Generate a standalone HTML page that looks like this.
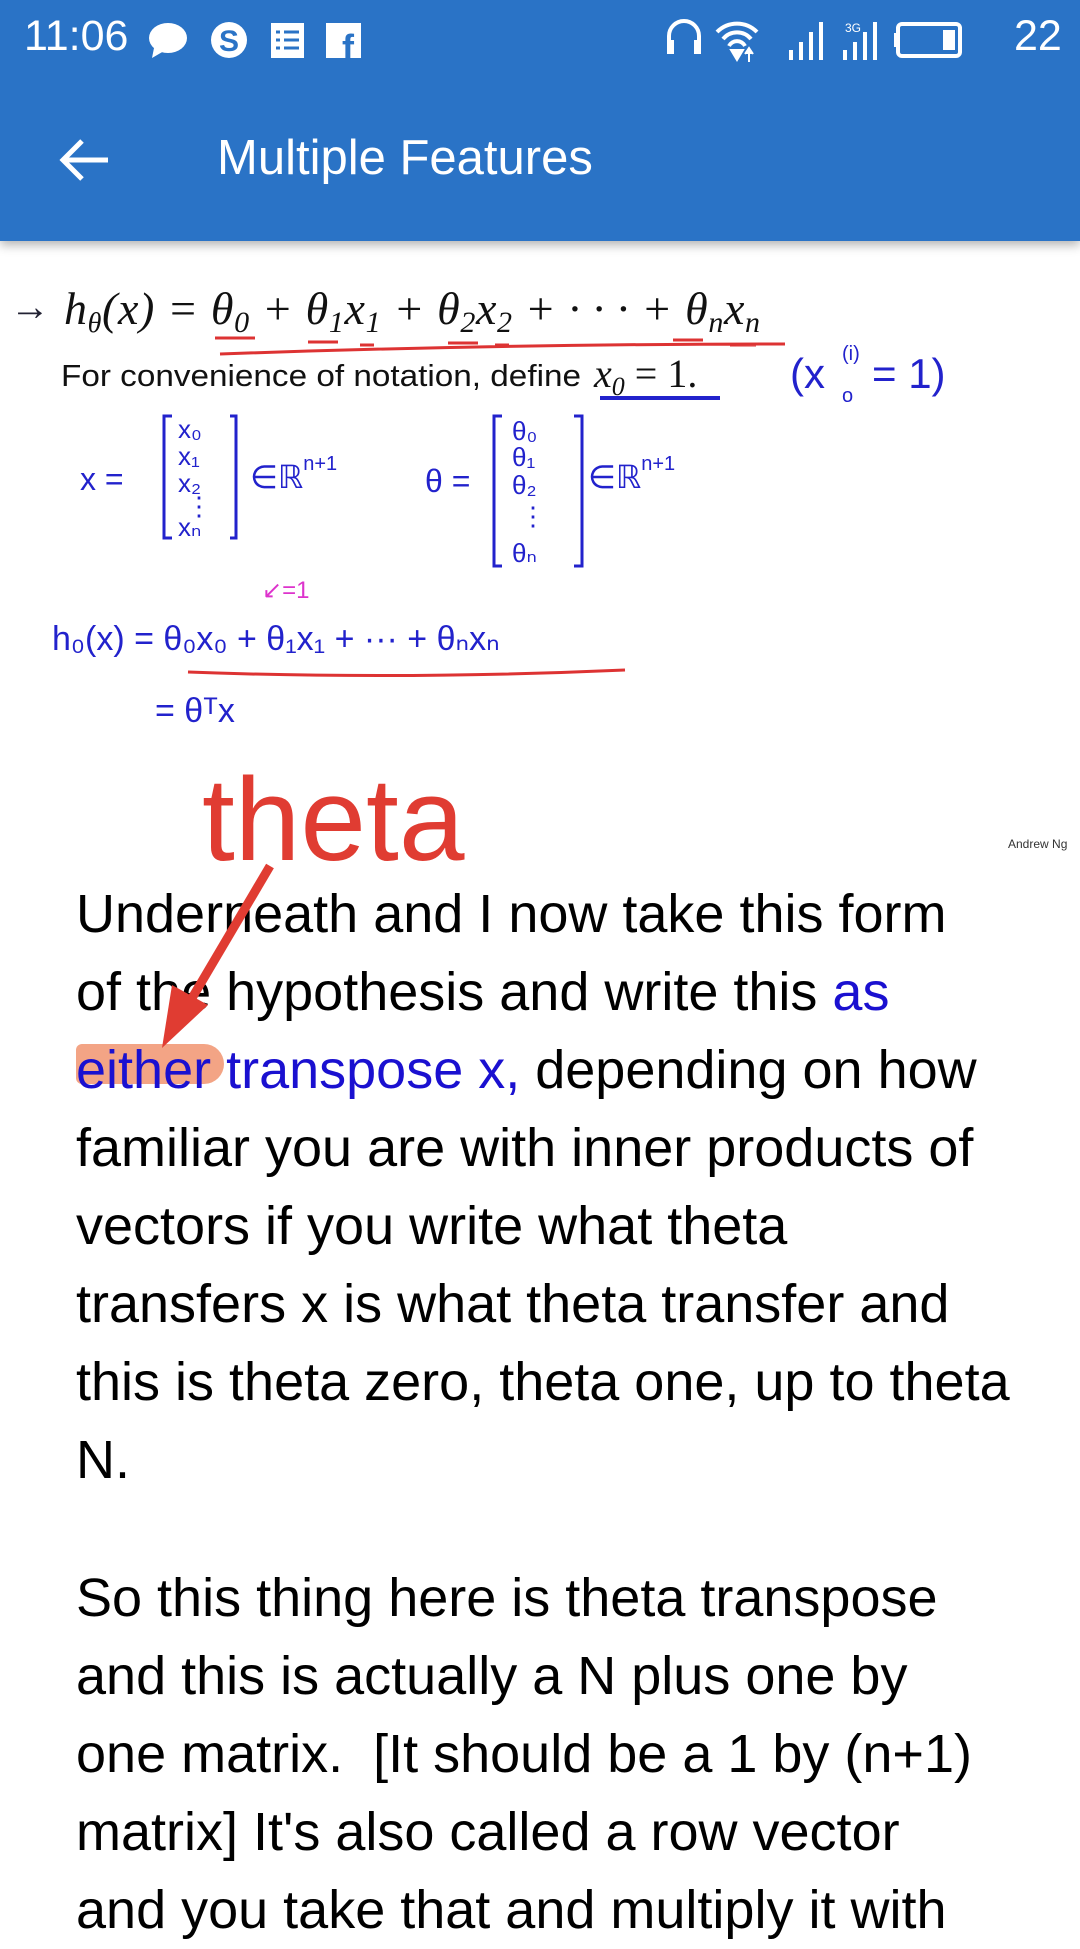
<!DOCTYPE html>
<html><head><meta charset="utf-8"><style>
body{margin:0;width:1080px;height:1920px;overflow:hidden;background:#fff;font-family:"Liberation Sans",sans-serif;position:relative}
.bar{position:absolute;left:0;top:0;width:1080px;height:241px;background:#2a73c6;box-shadow:0 4px 10px rgba(0,0,0,.3)}
.st{position:absolute;color:#fff;font-size:43px;top:12px}
.title{position:absolute;left:217px;top:130px;color:#fff;font-size:49px}
.txt{position:absolute;left:76px;font-size:54px;line-height:78px;color:#000;white-space:nowrap}
.b{color:#1a10d0}
</style></head><body>
<div class="bar">
<div class="st" style="left:24px">11:06</div>
<svg style="position:absolute;left:148px;top:20px" width="220" height="40" viewBox="0 0 220 40">
<ellipse cx="20" cy="18" rx="19" ry="15" fill="#fff"/><path d="M6 28 L4 38 L16 31Z" fill="#fff"/>
<circle cx="81" cy="20" r="18" fill="#fff"/><text x="81" y="31" font-size="30" font-weight="bold" text-anchor="middle" fill="#2a73c6" font-family="Liberation Sans">S</text>
<rect x="123" y="3" width="33" height="35" fill="#fff"/><path d="M128 12h4M136 12h15M128 20h4M136 20h15M128 28h4M136 28h15" stroke="#2a73c6" stroke-width="3"/>
<rect x="178" y="3" width="35" height="35" fill="#fff"/><text x="200" y="40" font-size="36" font-weight="bold" text-anchor="middle" fill="#2a73c6" font-family="Liberation Sans">f</text>
</svg>
<svg style="position:absolute;left:665px;top:18px" width="330" height="44" viewBox="0 0 330 44">
<path d="M4 30 V18 a15 15 0 0 1 30 0 V30" stroke="#fff" stroke-width="4" fill="none"/><rect x="2" y="22" width="7" height="14" fill="#fff"/><rect x="29" y="22" width="7" height="14" fill="#fff"/>
<path d="M52 14 a28 28 0 0 1 40 0 M58 21 a18 18 0 0 1 28 0 M64 28 a9 9 0 0 1 16 0" stroke="#fff" stroke-width="4" fill="none"/><path d="M66 32 L72 42 L78 32Z M84 44 V32 M80 36 L84 30 L88 36" fill="#fff" stroke="#fff" stroke-width="2"/>
<path d="M126 42V32 M136 42V24 M146 42V14 M156 42V4" stroke="#fff" stroke-width="4"/>
<text x="180" y="14" font-size="12" fill="#fff" font-family="Liberation Sans">3G</text>
<path d="M180 42V32 M190 42V24 M200 42V14 M210 42V4" stroke="#fff" stroke-width="4"/>
<rect x="233" y="6" width="62" height="32" rx="4" stroke="#fff" stroke-width="4" fill="none"/><rect x="278" y="12" width="12" height="20" fill="#fff"/><rect x="229" y="15" width="4" height="14" fill="#fff"/>
</svg>
<div class="st" style="left:1014px">22</div>
<svg style="position:absolute;left:58px;top:138px" width="52" height="44" viewBox="0 0 52 44"><path d="M50 22H6 M24 3 L5 22 L24 41" stroke="#fff" stroke-width="5" fill="none"/></svg>
<div class="title">Multiple Features</div>
</div>

<svg style="position:absolute;left:0;top:260px" width="1080" height="600" viewBox="0 0 1080 600" font-family="Liberation Serif">
<text x="10" y="60" font-size="40" fill="#223">→</text>
<text x="64" y="64" font-size="46" font-style="italic" fill="#111" textLength="696" lengthAdjust="spacing">h<tspan font-size="28" dy="8">θ</tspan><tspan dy="-8">(x) = θ</tspan><tspan font-size="30" dy="8">0</tspan><tspan dy="-8"> + θ</tspan><tspan font-size="30" dy="8">1</tspan><tspan dy="-8">x</tspan><tspan font-size="30" dy="8">1</tspan><tspan dy="-8"> + θ</tspan><tspan font-size="30" dy="8">2</tspan><tspan dy="-8">x</tspan><tspan font-size="30" dy="8">2</tspan><tspan dy="-8"> + · · · + θ</tspan><tspan font-size="30" dy="8">n</tspan><tspan dy="-8">x</tspan><tspan font-size="30" dy="8">n</tspan></text>
<path d="M215 78h40 M308 82h30 M360 85h14 M448 83h30 M495 85h14 M673 80h30 M730 85h26 M220 94 Q500 84 785 84" stroke="#d33" stroke-width="3" fill="none"/>
<text x="61" y="126" font-size="31" fill="#111" font-family="Liberation Sans" textLength="520" lengthAdjust="spacingAndGlyphs">For convenience of notation, define</text>
<text x="594" y="127" font-size="40" font-style="italic" fill="#111">x<tspan font-size="26" dy="8">0</tspan><tspan dy="-8" font-style="normal"> = 1.</tspan></text>
<path d="M600 138 h120" stroke="#22c" stroke-width="4"/>
<g fill="#22c" font-family="Liberation Sans"><text x="790" y="128" font-size="42">(x</text><text x="842" y="142" font-size="20">o</text><text x="842" y="100" font-size="20">(i)</text><text x="872" y="128" font-size="42">= 1)</text></g>
<g stroke="#22c" stroke-width="3" fill="none"><path d="M172 156h-8v122h8 M230 156h6v122h-6 M502 156h-8v150h8 M574 156h8v150h-8"/></g>
<g fill="#22c" font-size="26" font-family="Liberation Sans">
<text x="80" y="230" font-size="32">x =</text><text x="178" y="178">x₀</text><text x="178" y="205">x₁</text><text x="178" y="232">x₂</text><text x="186" y="255">⋮</text><text x="178" y="276">xₙ</text>
<text x="250" y="228" font-size="32">∈ℝ<tspan font-size="20" dy="-18">n+1</tspan></text>
<text x="425" y="232" font-size="32">θ =</text><text x="512" y="180">θ₀</text><text x="512" y="206">θ₁</text><text x="512" y="234">θ₂</text><text x="520" y="265">⋮</text><text x="512" y="302">θₙ</text>
<text x="588" y="228" font-size="32">∈ℝ<tspan font-size="20" dy="-18">n+1</tspan></text>
<text x="52" y="390" font-size="34">h₀(x) = θ₀x₀ + θ₁x₁ + ··· + θₙxₙ</text>
<text x="155" y="462" font-size="34">= θᵀx</text>
</g>
<text x="262" y="338" font-size="24" fill="#d3c" font-family="Liberation Sans">↙=1</text>
<path d="M188 412 Q400 420 625 410" stroke="#d33" stroke-width="3" fill="none"/>
<text x="1008" y="588" font-size="12" fill="#333" font-family="Liberation Sans">Andrew Ng</text>
</svg>

<div style="position:absolute;left:202px;top:752px;font-size:118px;color:#e03c32">theta</div>

<div style="position:absolute;left:76px;top:1044px;width:148px;height:40px;background:#f29a78;border-radius:6px 20px 20px 6px;opacity:.9"></div>

<div class="txt" style="top:875px">Underneath and I now take this form<br>of the hypothesis and write this <span class="b">as</span><br><span class="b">either transpose x,</span> depending on how<br>familiar you are with inner products of<br>vectors if you write what theta<br>transfers x is what theta transfer and<br>this is theta zero, theta one, up to theta<br>N.</div>

<div class="txt" style="top:1559px">So this thing here is theta transpose<br>and this is actually a N plus one by<br>one matrix.&nbsp; [It should be a 1 by (n+1)<br>matrix] It's also called a row vector<br>and you take that and multiply it with</div>

<svg style="position:absolute;left:0;top:0" width="1080" height="1920"><path d="M270 866 L185 1010" stroke="#e03c32" stroke-width="9"/><path d="M162 1048 L172 985 L208 1005Z" fill="#e03c32"/></svg>
</body></html>
